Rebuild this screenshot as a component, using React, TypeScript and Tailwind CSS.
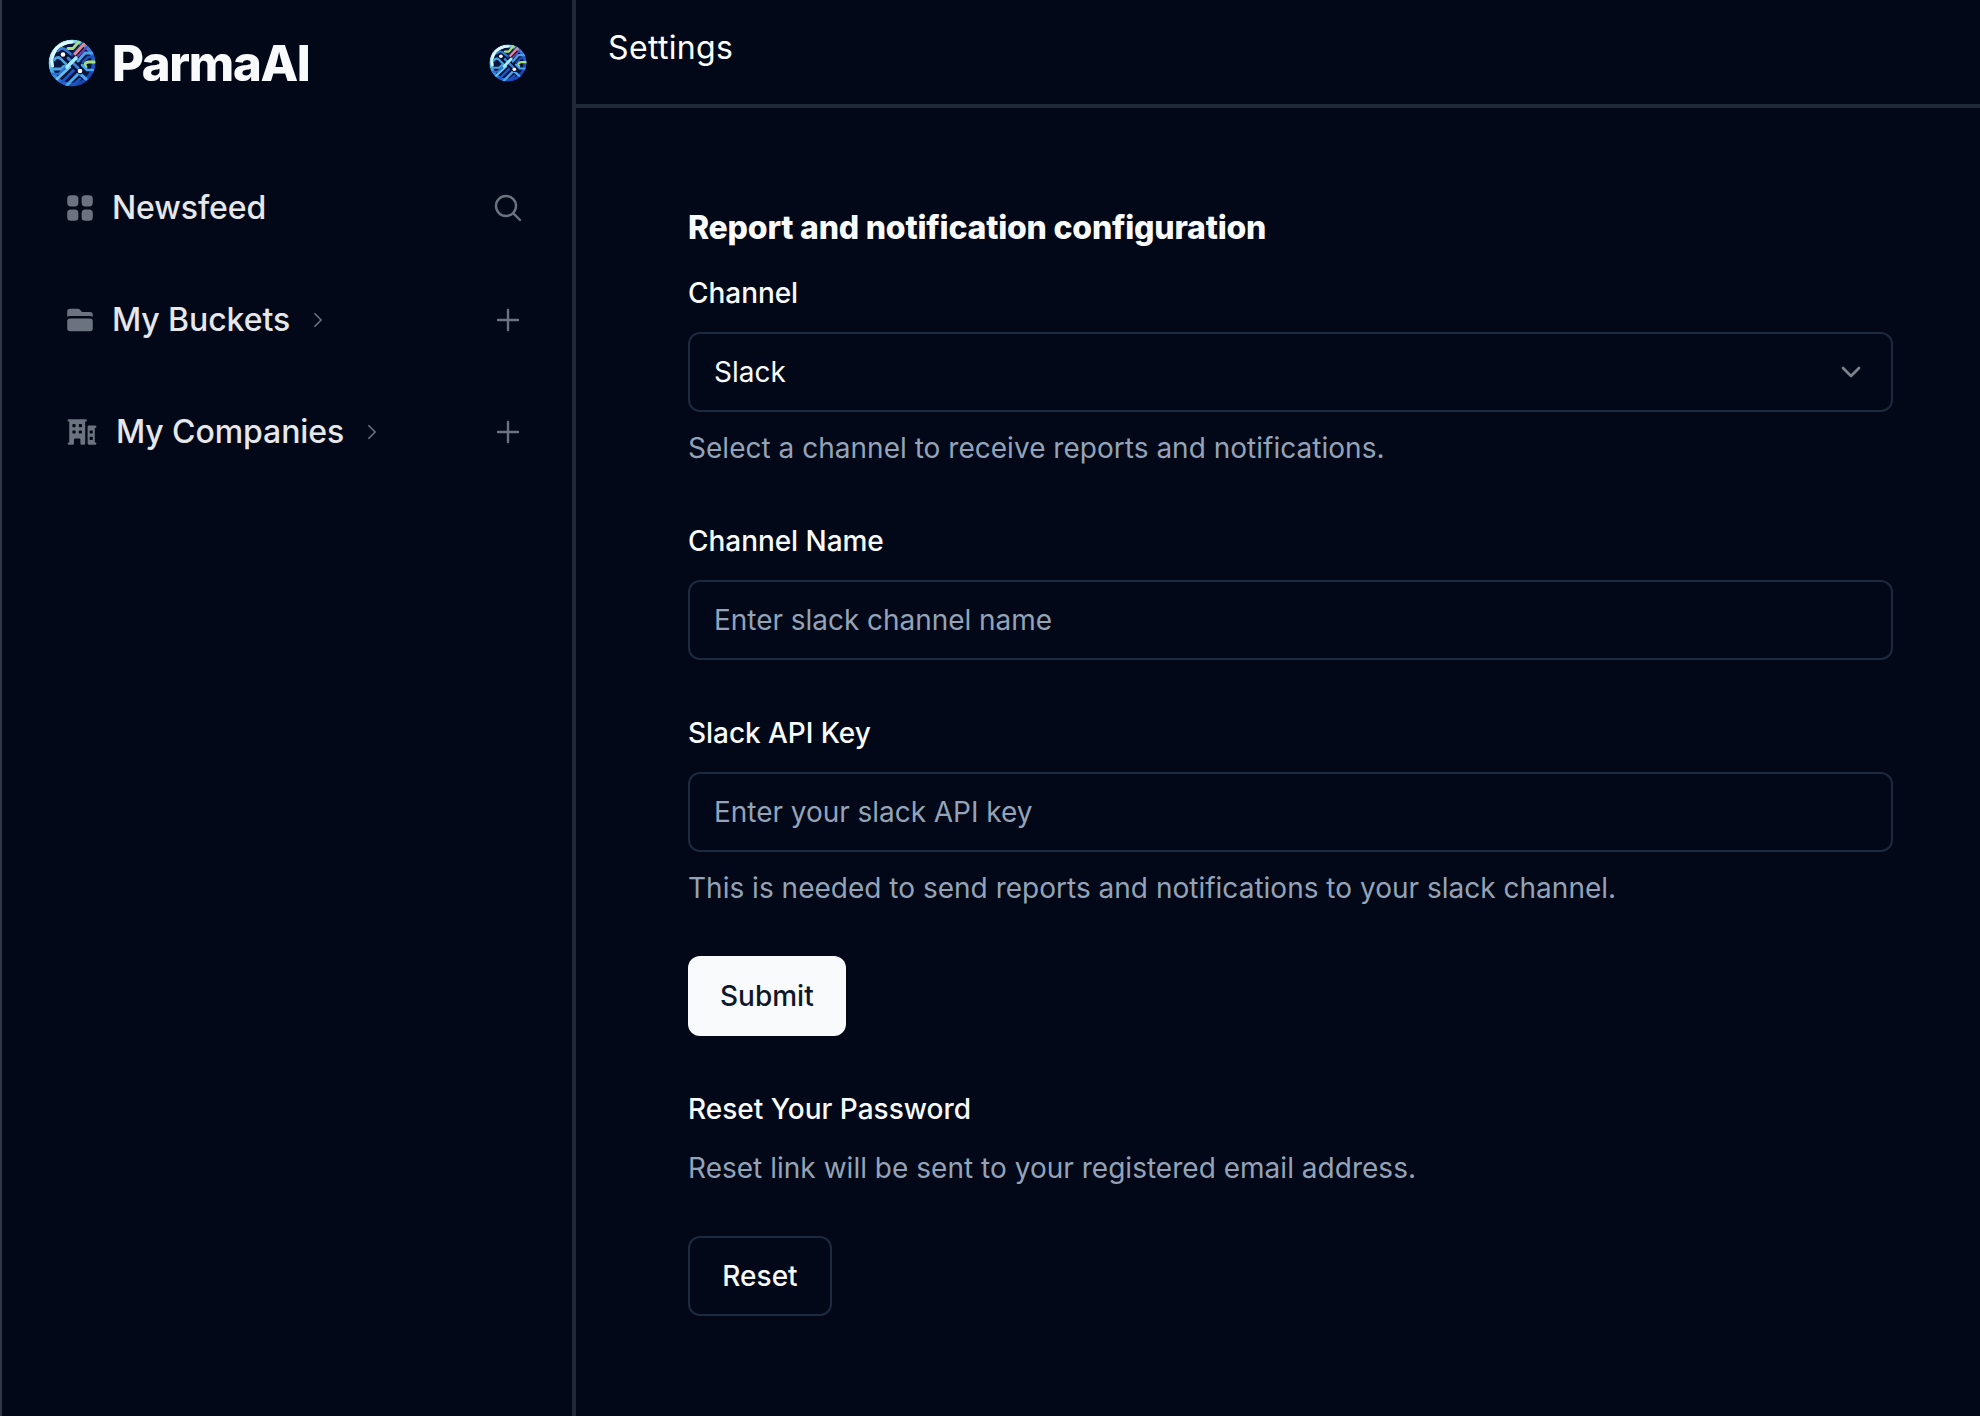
import React from "react";
import { ChevronDown } from "lucide-react";
import { HiMiniSquares2X2, HiMiniFolder, HiMiniBuildingOffice2, HiOutlineMagnifyingGlass, HiOutlinePlus, HiOutlineChevronRight } from "react-icons/hi2";

function Logo({ id, className }: { id: string; className: string }) {
  return (
    <svg viewBox="0 0 48 48" className={className} fill="none" strokeLinecap="round" strokeLinejoin="round">
      <defs>
        <clipPath id={`${id}-clip`}><circle cx="24" cy="24" r="23.5" /></clipPath>
        <linearGradient id={`${id}-rim`} x1="8" y1="6" x2="40" y2="42" gradientUnits="userSpaceOnUse">
          <stop offset="0" stopColor="#d6fbff" />
          <stop offset="0.3" stopColor="#52b8ee" />
          <stop offset="0.6" stopColor="#2b6fd8" />
          <stop offset="1" stopColor="#153fa6" />
        </linearGradient>
      </defs>
      <g clipPath={`url(#${id}-clip)`}>
        <circle cx="24" cy="24" r="24" fill="#07163f" />
        <circle cx="24" cy="24" r="21.6" stroke={`url(#${id}-rim)`} strokeWidth="3.8" />
        <path d="M4.5 27C2 15 10 4 24 3" stroke="#dffcff" strokeWidth="3" />
        <path d="M20 9.500h5l6-7" stroke="#a9e07c" strokeWidth="2.8" />
        <path d="M10 12c3-4 6-3 9 0l5 4" stroke="#2f7fd6" strokeWidth="2.6" />
        <path d="M24 16l11-12" stroke="#1d3f94" strokeWidth="2.2" />
        <path d="M27 15l9-10" stroke="#e98a90" strokeWidth="2.8" />
        <path d="M30 17l9-9" stroke="#6e46b4" strokeWidth="2" />
        <path d="M30 22l7-8h7" stroke="#4d9fe8" strokeWidth="3" />
        <path d="M35 23l5-5h7" stroke="#1c4fb8" strokeWidth="2.6" />
        <path d="M47 23h-6c-4 0-5 3-3 5" stroke="#a9df79" strokeWidth="2.8" />
        <path d="M34 26l5 5h6" stroke="#4aa4ee" strokeWidth="2.6" />
        <path d="M6 21c3-4 6-3 9 1l3 3-5 5H4" stroke="#4aa6e2" strokeWidth="2.8" />
        <path d="M3 35h8l8-8" stroke="#2d6fd6" strokeWidth="2.6" />
        <path d="M9 40l13-12" stroke="#65c3ed" strokeWidth="2.6" />
        <path d="M14 43l12-12" stroke="#2456c4" strokeWidth="2.8" />
        <path d="M18 47l13-13 7 6" stroke="#4ba6ee" strokeWidth="3" />
        <path d="M26 45l6-5" stroke="#1e55c4" strokeWidth="2.6" />
        <path d="M15 15.500l17 16.500" stroke="#050f30" strokeWidth="6.500" />
        <path d="M20 19l10 10" stroke="#377fd8" strokeWidth="3" />
        <path d="M19 28l9-9" stroke="#a2ecfc" strokeWidth="3.6" />
        <circle cx="15" cy="15.500" r="2.300" fill="#fff" />
        <circle cx="32" cy="32" r="2.300" fill="#fff" />
      </g>
    </svg>
  );
}

function NavItem({ icon, label, expandable, action }: { icon: React.ReactNode; label: string; expandable?: boolean; action: React.ReactNode }) {
  return (
    <div className="flex h-12 items-center text-[#6b7280]">
      {icon}
      <span className="ml-4 text-[32px] leading-[48px] font-medium tracking-[-0.08px] text-[#e5e7eb]">{label}</span>
      {expandable && <HiOutlineChevronRight className="ml-[18px] size-5 stroke-2" />}
      <span className="ml-auto">{action}</span>
    </div>
  );
}

function Label({ children }: { children: React.ReactNode }) {
  return <label className="h-12 pt-px leading-[48px] font-medium tracking-[-0.05px]">{children}</label>;
}

function TextField({ label, placeholder, help }: { label: string; placeholder: string; help?: string }) {
  return (
    <div className="flex flex-col gap-4">
      <Label>{label}</Label>
      <input placeholder={placeholder} className="h-20 w-full rounded-xl border-2 border-slate-800 bg-transparent px-6 tracking-[-0.04px] placeholder:text-[#94a3b8]" />
      {help && <p className="leading-10 tracking-[0.01px] text-[#94a3b8]">{help}</p>}
    </div>
  );
}

export default function App() {
  return (
    <div className="flex h-[1416px] w-[1980px] overflow-hidden bg-[#020817] font-['Inter',sans-serif] text-[28px] text-[#f8fafc]">
      <aside className="flex w-[576px] shrink-0 flex-col border-r-4 border-l-2 border-r-[#1f2937] border-l-[#303846] pr-12 pl-[62px]">
        <div className="-mr-1 -ml-4 flex h-[126px] items-center">
          <Logo id="brand" className="size-12" />
          <span className="ml-4 pt-0.5 text-[49px] font-extrabold tracking-[-1.3px]">ParmaAI</span>
          <Logo id="avatar" className="mr-px ml-auto size-[38px]" />
        </div>
        <nav className="mt-[58px] flex flex-col gap-16">
          <NavItem icon={<HiMiniSquares2X2 className="size-8" />} label="Newsfeed" action={<HiOutlineMagnifyingGlass className="size-8 stroke-[1.8]" />} />
          <NavItem expandable icon={<HiMiniFolder className="size-8" />} label="My Buckets" action={<HiOutlinePlus className="size-8 stroke-[1.8]" />} />
          <NavItem expandable icon={<HiMiniBuildingOffice2 className="mx-0.5 size-8" />} label="My Companies" action={<HiOutlinePlus className="size-8 stroke-[1.8]" />} />
        </nav>
      </aside>
      <main className="flex grow flex-col">
        <header className="h-[108px] border-b-4 border-[#1f2937] px-8 pt-6 text-[32px] leading-[48px] tracking-[0.35px] text-white">Settings</header>
        <div className="flex w-[1317px] flex-col gap-12 pt-24 pl-28">
          <section className="flex flex-col gap-4">
            <h2 className="text-[32px] leading-[48px] font-extrabold tracking-[-0.22px]">Report and notification configuration</h2>
            <Label>Channel</Label>
            <button className="flex h-20 items-center justify-between rounded-xl border-2 border-slate-800 px-6">
              <span>Slack</span>
              <ChevronDown className="size-8 opacity-50" />
            </button>
            <p className="leading-10 tracking-[0.02px] text-[#94a3b8]">Select a channel to receive reports and notifications.</p>
          </section>
          <TextField label="Channel Name" placeholder="Enter slack channel name" />
          <TextField label="Slack API Key" placeholder="Enter your slack API key" help="This is needed to send reports and notifications to your slack channel." />
          <button className="h-20 self-start rounded-xl bg-[#f8fafc] px-8 font-medium text-[#0f172a]">Submit</button>
          <section className="flex flex-col gap-4">
            <h3 className="h-12 pt-px leading-[48px] font-medium">Reset Your Password</h3>
            <p className="leading-10 tracking-[0.02px] text-[#94a3b8]">Reset link will be sent to your registered email address.</p>
          </section>
          <button className="h-20 w-36 self-start rounded-xl border-2 border-slate-800 font-medium">Reset</button>
        </div>
      </main>
    </div>
  );
}
